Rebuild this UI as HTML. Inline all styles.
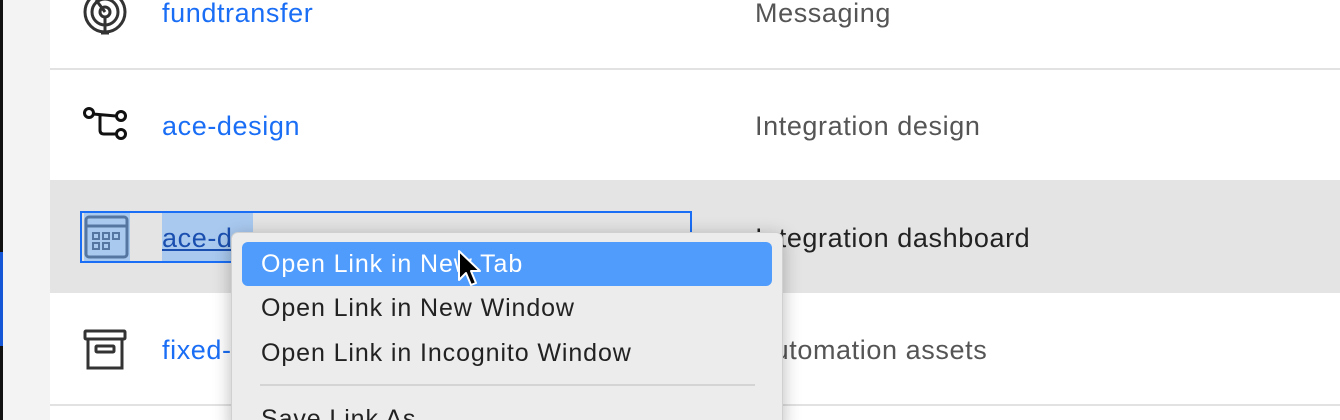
<!DOCTYPE html>
<html><head><meta charset="utf-8"><style>
*{margin:0;padding:0;box-sizing:border-box}
html,body{width:1340px;height:420px;overflow:hidden}
body{background:#fff;position:relative;font-family:"Liberation Sans",sans-serif}
.abs{position:absolute}
.row{position:absolute;left:50px;right:0}
.link{position:absolute;left:162px;font-size:27px;color:#1a6ef5;line-height:30px;letter-spacing:0.6px;white-space:nowrap}
.desc{position:absolute;left:755px;font-size:27px;color:#555;line-height:30px;letter-spacing:0.6px;white-space:nowrap}
.line{position:absolute;left:50px;right:0;height:2px;background:#e2e2e2}
.menu{position:absolute;left:231px;top:232px;width:552px;height:200px;background:#ececec;border-radius:7px;box-shadow:0 4px 18px rgba(0,0,0,.28);border:1px solid #d0d0d0}
.mi{position:absolute;left:29px;font-size:25px;color:#222;line-height:28px;letter-spacing:0.9px;white-space:nowrap}
</style></head><body>
<div class="abs" style="left:0;top:0;width:3px;height:420px;background:#111"></div>
<div class="abs" style="left:0;top:252px;width:3px;height:94px;background:#1456d6"></div>
<div class="abs" style="left:3px;top:0;width:47px;height:420px;background:#f3f3f3"></div>

<svg class="abs" style="left:82px;top:-10px" width="46" height="46" viewBox="0 0 46 46" fill="none" stroke="#333" stroke-width="3">
<circle cx="23" cy="22" r="20"/><circle cx="23" cy="22" r="13"/><circle cx="23" cy="22" r="5"/><path d="M23 27 V43 M19 43 H27 M14 10 L23 22"/></svg>
<div class="link" style="top:-2px">fundtransfer</div>
<div class="desc" style="top:-2px">Messaging</div>
<div class="line" style="top:68px"></div>

<svg class="abs" style="left:82px;top:106px" width="48" height="36" viewBox="0 0 48 36" fill="none" stroke="#111" stroke-width="3">
<circle cx="7" cy="7" r="4.5"/><circle cx="39" cy="10" r="4.5"/><circle cx="39" cy="28" r="4.5"/><path d="M11 8 L34 10 M18 9 V24 Q18 28 22 28 H34"/></svg>
<div class="link" style="top:111px">ace-design</div>
<div class="desc" style="top:111px">Integration design</div>

<div class="row" style="top:180px;height:113px;background:#e4e4e4"></div>
<div class="abs" style="left:84px;top:212px;width:46px;height:50px;background:#a9c9ef"></div>
<div class="abs" style="left:162px;top:212px;width:91px;height:50px;background:#a9c9ef"></div>
<svg class="abs" style="left:84px;top:215px" width="45" height="44" viewBox="0 0 45 44" fill="none" stroke="#5576a0" stroke-width="3">
<rect x="2" y="2" width="41" height="40" rx="3"/><path d="M2 11 H43"/>
<g stroke-width="2"><rect x="9" y="18" width="6" height="6"/><rect x="19" y="18" width="6" height="6"/><rect x="29" y="18" width="6" height="6"/><rect x="9" y="28" width="6" height="6"/><rect x="19" y="28" width="6" height="6"/></g></svg>
<div class="abs" style="left:162px;top:212px;width:91px;height:50px;overflow:hidden"><div class="link" style="left:0;top:11px;color:#1a4fb0;text-decoration:underline">ace-dashboard</div></div>
<div class="desc" style="top:223px;color:#222">Integration dashboard</div>
<div class="abs" style="left:80px;top:211px;width:612px;height:52px;border:2px solid #1a6ef5"></div>

<svg class="abs" style="left:83px;top:329px" width="46" height="42" viewBox="0 0 46 42" fill="none" stroke="#333" stroke-width="3">
<rect x="2" y="2" width="40" height="8" rx="1"/><path d="M5 10 V39 H39 V10"/><rect x="13" y="17" width="18" height="6" rx="1"/></svg>
<div class="link" style="top:335px">fixed-assets</div>
<div class="desc" style="top:335px">Automation assets</div>
<div class="line" style="top:404px"></div>

<div class="menu">
<div class="abs" style="left:10px;top:9px;width:530px;height:44px;background:#4f9cfd;border-radius:6px"></div>
<div class="mi" style="top:17px;color:#fff">Open Link in New Tab</div>
<div class="mi" style="top:61px">Open Link in New Window</div>
<div class="mi" style="top:106px">Open Link in Incognito Window</div>
<div class="abs" style="left:28px;top:151px;width:495px;height:2px;background:#d4d4d4"></div>
<div class="mi" style="top:172px">Save Link As...</div>
</div>

<svg class="abs" style="left:456px;top:249px" width="26" height="40" viewBox="0 0 26 40">
<path d="M3 2 V31 L10 24 L15 36 L20 34 L15 22 L24 22 Z" fill="#000" stroke="#fff" stroke-width="2" stroke-linejoin="round"/></svg>
</body></html>
